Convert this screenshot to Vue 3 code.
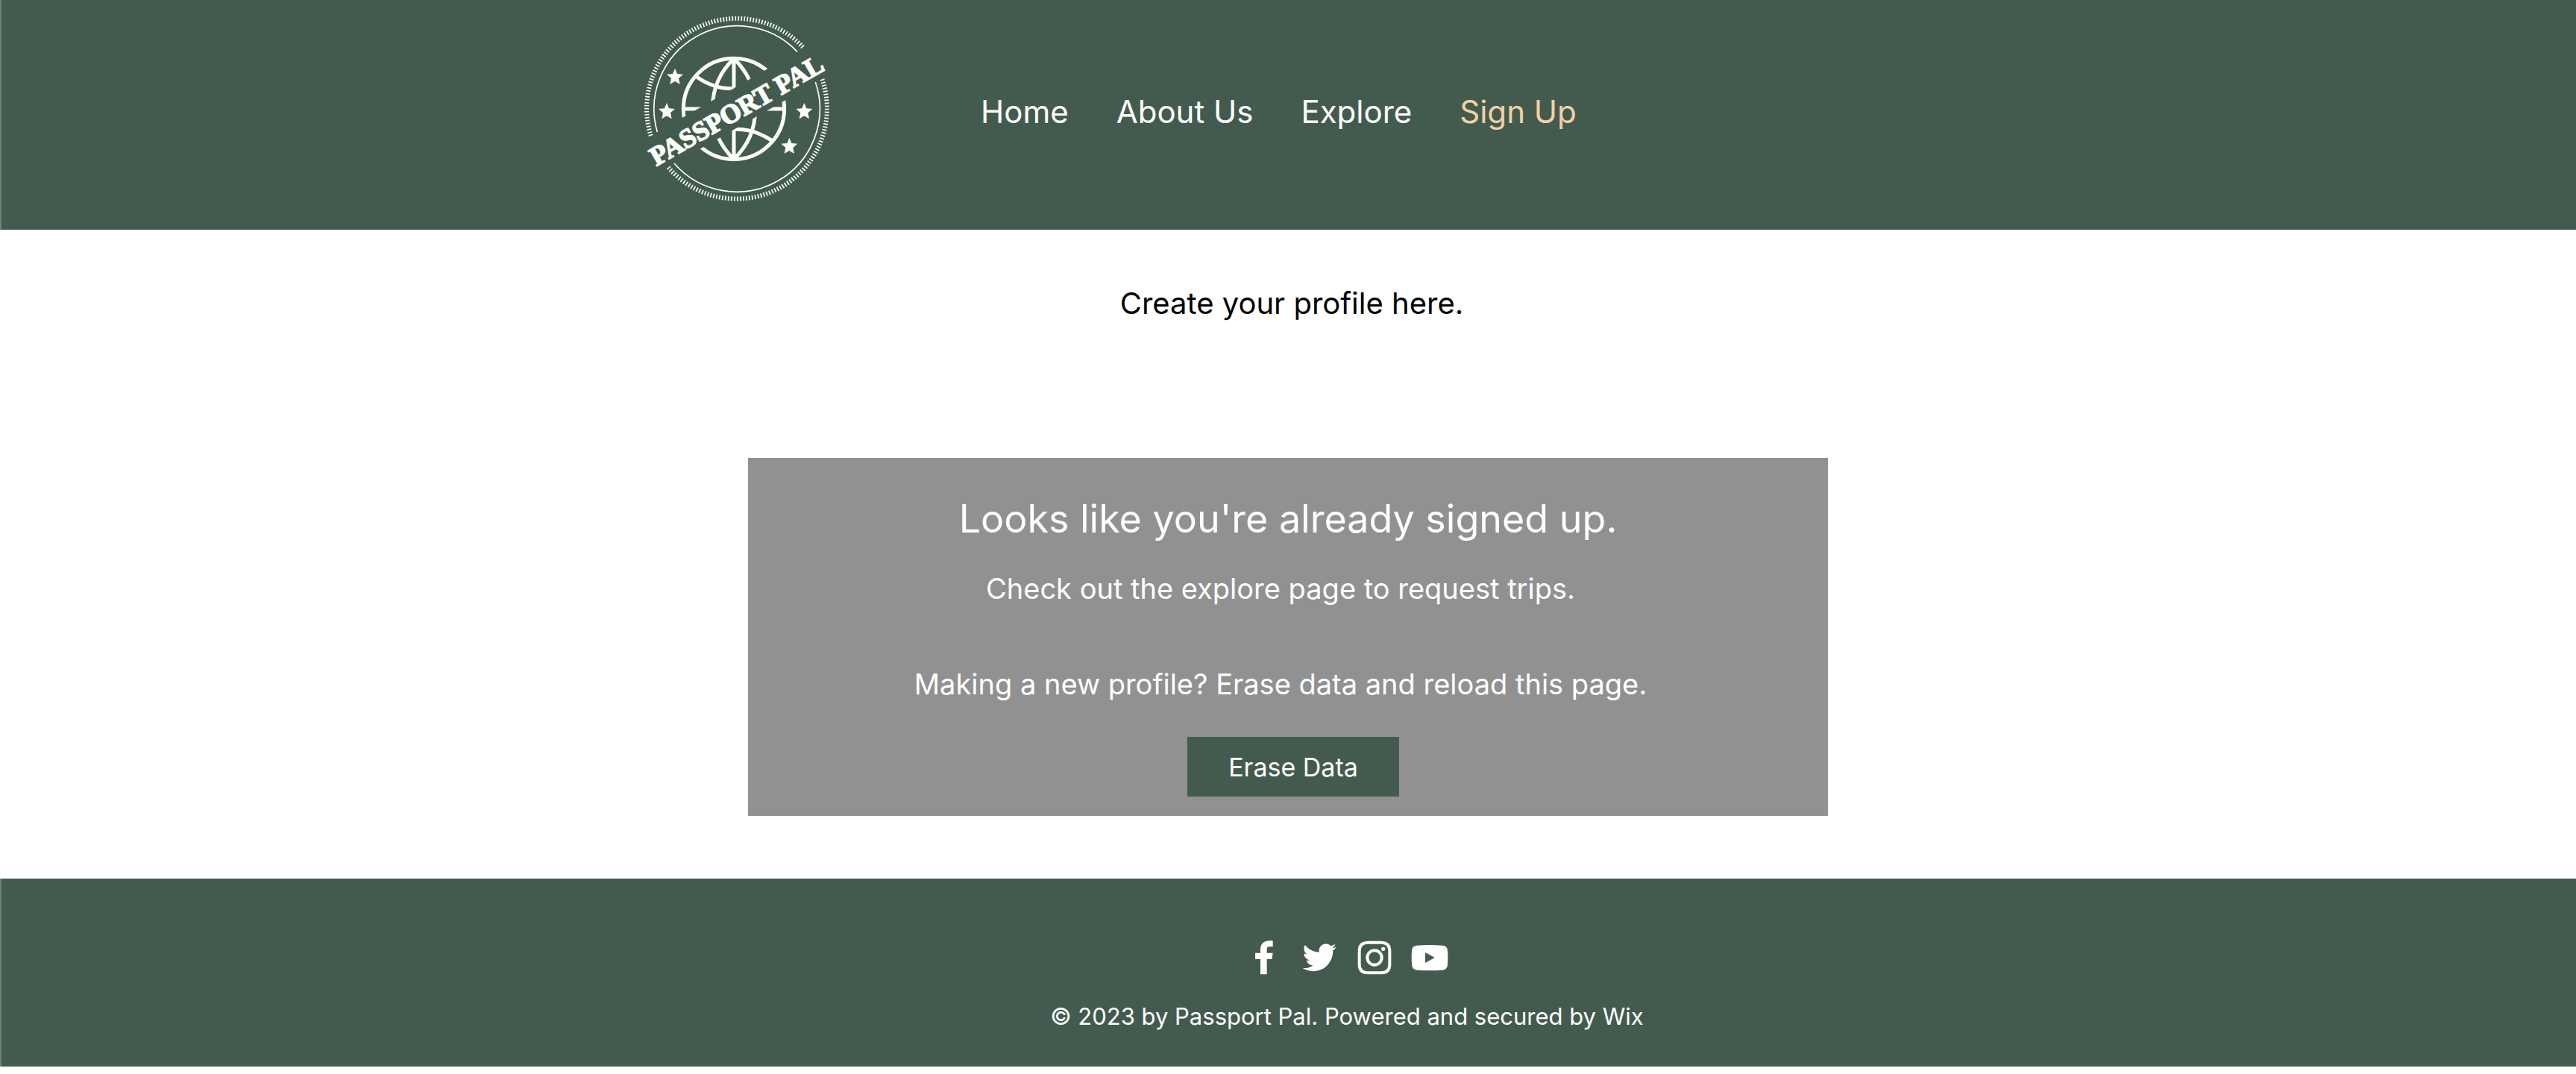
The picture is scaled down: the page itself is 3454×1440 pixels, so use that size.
<template>
  <div class="page">
    <header class="site-header">
      <div class="header-inner">
        <a class="logo" href="#" aria-label="Passport Pal">
          <svg viewBox="0 0 900 924">
            <defs>
              <!-- everything above and below the slanted name -->
              <clipPath id="band">
                <polygon points="0,0 900,0 900,84 0,601" />
                <polygon points="0,768 900,251 900,924 0,924" />
              </clipPath>
              <polygon
                id="star"
                points="0,-34 9,-12 33,-10 15,6 20,30 0,18 -20,30 -15,6 -33,-10 -9,-12"
              />
            </defs>
            <g class="line">
              <path
                class="ticks"
                d="M784 319A363 363 0 0 1 165 673M95 546A363 363 0 0 1 709 192"
              />
              <path
                class="ring"
                d="M757 330A334 334 0 0 1 189 657M121 531A334 334 0 0 1 684 208"
              />
            </g>
            <g class="line globe" clip-path="url(#band)">
              <circle cx="429" cy="438" r="203" />
              <path
                d="M429 235V641M226 438H632M429 235C375 290 343 350 343 438S375 586 429 641M429 235C483 290 515 350 515 438S483 586 429 641"
              />
              <path d="M275 306Q350 360 429 356M583 566Q507 516 429 520" />
            </g>
            <use
              v-for="star in stars"
              :key="star.id"
              href="#star"
              :x="star.x"
              :y="star.y"
              fill="#fdfffb"
            />
            <text class="logo-text" transform="translate(117 669) rotate(-29.7)">PASSPORT PAL</text>
          </svg>
        </a>

        <nav class="nav">
          <a
            v-for="item in navItems"
            :key="item"
            href="#"
            class="nav-link"
            :class="{ active: item === currentPage }"
            @click.prevent="currentPage = item"
          >
            {{ item }}
          </a>
        </nav>
      </div>
    </header>

    <main class="content">
      <p class="intro">Create your profile here.</p>

      <section class="card">
        <h1 class="card-title">Looks like you're already signed up.</h1>
        <div class="card-text">
          <p>Check out the explore page to request trips.</p>
          <p>Making a new profile? Erase data and reload this page.</p>
        </div>
        <div class="card-actions">
          <button type="button" class="erase-button" @click="eraseData">Erase Data</button>
        </div>
      </section>
    </main>

    <footer class="site-footer">
      <div class="footer-inner">
        <div class="socials">
          <a v-for="social in socials" :key="social.name" href="#" :aria-label="social.name">
            <svg :viewBox="social.viewBox">
              <path :d="social.path" fill-rule="evenodd" />
            </svg>
          </a>
        </div>
        <p class="copyright">© 2023 by Passport Pal. Powered and secured by Wix</p>
      </div>
    </footer>
  </div>
</template>

<script setup>
import { ref } from 'vue'

const navItems = ['Home', 'About Us', 'Explore', 'Sign Up']
const currentPage = ref('Sign Up')

const stars = [
  { id: 1, x: 192, y: 309 },
  { id: 2, x: 159, y: 448 },
  { id: 3, x: 712, y: 448 },
  { id: 4, x: 652, y: 588 },
]

const socials = [
  {
    name: 'Facebook',
    viewBox: '34 57 150 150',
    path: 'M144 64H130C107 64 94 78 94 99V113H73V138H94V199H120V138H140L144 113H120V98Q120 88 130 88H144Z',
  },
  {
    name: 'Twitter',
    viewBox: '-1.4 -1.15 26.55 26.55',
    path: 'M23.953 4.57a10 10 0 01-2.825.775 4.958 4.958 0 002.163-2.723c-.951.555-2.005.959-3.127 1.184a4.92 4.92 0 00-8.384 4.482C7.69 8.095 4.067 6.13 1.64 3.162a4.822 4.822 0 00-.666 2.475c0 1.71.87 3.213 2.188 4.096a4.904 4.904 0 01-2.228-.616v.06a4.923 4.923 0 003.946 4.827 4.996 4.996 0 01-2.212.085 4.936 4.936 0 004.604 3.417 9.867 9.867 0 01-6.102 2.105c-.39 0-.779-.023-1.17-.067a13.995 13.995 0 007.557 2.209c9.053 0 13.998-7.496 13.998-13.985 0-.21 0-.42-.015-.63A9.935 9.935 0 0024 4.59z',
  },
  {
    name: 'Instagram',
    viewBox: '477 57 150 150',
    path: 'M525 65H579Q619 65 619 105V159Q619 199 579 199H525Q485 199 485 159V105Q485 65 525 65ZM526 77Q497 77 497 106V158Q497 187 526 187H578Q607 187 607 158V106Q607 77 578 77ZM552 97a35 35 0 1 1 0 70a35 35 0 1 1 0-70ZM552 109a23 23 0 1 0 0 46a23 23 0 1 0 0-46ZM587 89a8 8 0 1 1 0 16a8 8 0 1 1 0-16Z',
  },
  {
    name: 'YouTube',
    viewBox: '700 57 150 150',
    path: 'M723 83Q775 79 827 83Q843 84 846 99Q850 132 846 166Q843 181 827 182Q775 185 723 182Q707 181 704 166Q700 132 704 99Q707 84 723 83ZM757 111V153L795 132Z',
  },
]

const eraseData = () => {
  localStorage.clear()
}
</script>

<style>
body {
  margin: 0;
  background-color: #fff;
}
</style>

<style scoped>
.page {
  font-family: Inter, 'Liberation Sans', sans-serif;
  color: #fff;
}

p,
h1 {
  margin: 0;
  font-weight: 400;
}

.site-header,
.site-footer {
  background-color: #435b4e;
  border-left: 2px solid #6c8376;
}

.header-inner {
  display: flex;
  align-items: center;
  max-width: 1774px;
  margin: 0 auto;
}

.logo svg {
  display: block;
  width: 300px;
}

.line {
  fill: none;
  stroke: #fdfffb;
}

.ticks {
  stroke-width: 18;
  stroke-dasharray: 5 7;
}

.ring {
  stroke-width: 5;
}

.globe {
  stroke-width: 15;
}

.logo-text {
  font-family: 'Liberation Serif', serif;
  font-size: 108px;
  font-weight: 700;
  fill: #fdfffb;
  stroke: #fdfffb;
  stroke-width: 5;
}

.nav {
  display: flex;
  flex-wrap: wrap;
  gap: 64px;
  margin-left: 174px;
  padding-bottom: 8px;
  font-size: 42px;
  line-height: 50px;
}

.nav-link {
  color: #fff;
  text-decoration: none;
}

.nav-link.active {
  color: #f3d0a5;
}

.content {
  padding: 74px 0 84px;
  text-align: center;
  font-size: 38px;
  line-height: 50px;
}

.intro {
  padding-left: 10px;
  color: #000;
  font-size: 40px;
}

.card {
  max-width: 1448px;
  margin: 182px auto 0;
  padding: 47px 0 26px;
  box-sizing: border-box;
  background-color: #919191;
}

.card-title {
  font-size: 52px;
  line-height: 70px;
}

.card-text {
  display: flex;
  flex-direction: column;
  gap: 78px;
  padding: 33px 20px 46px 0;
}

.card-actions {
  display: flex;
  justify-content: center;
  padding-left: 14px;
}

.erase-button {
  width: 284px;
  height: 80px;
  border: none;
  background-color: #435b4e;
  color: #fff;
  font-family: inherit;
  font-size: 34px;
  cursor: pointer;
}

.footer-inner {
  display: flex;
  flex-direction: column;
  align-items: center;
  gap: 29px;
  padding: 81px 0 42px 156px;
}

.socials {
  display: flex;
  gap: 24px;
}

.socials svg {
  display: block;
  width: 50px;
  height: 50px;
  fill: #fff;
}

.copyright {
  font-size: 31px;
  line-height: 50px;
}
</style>
